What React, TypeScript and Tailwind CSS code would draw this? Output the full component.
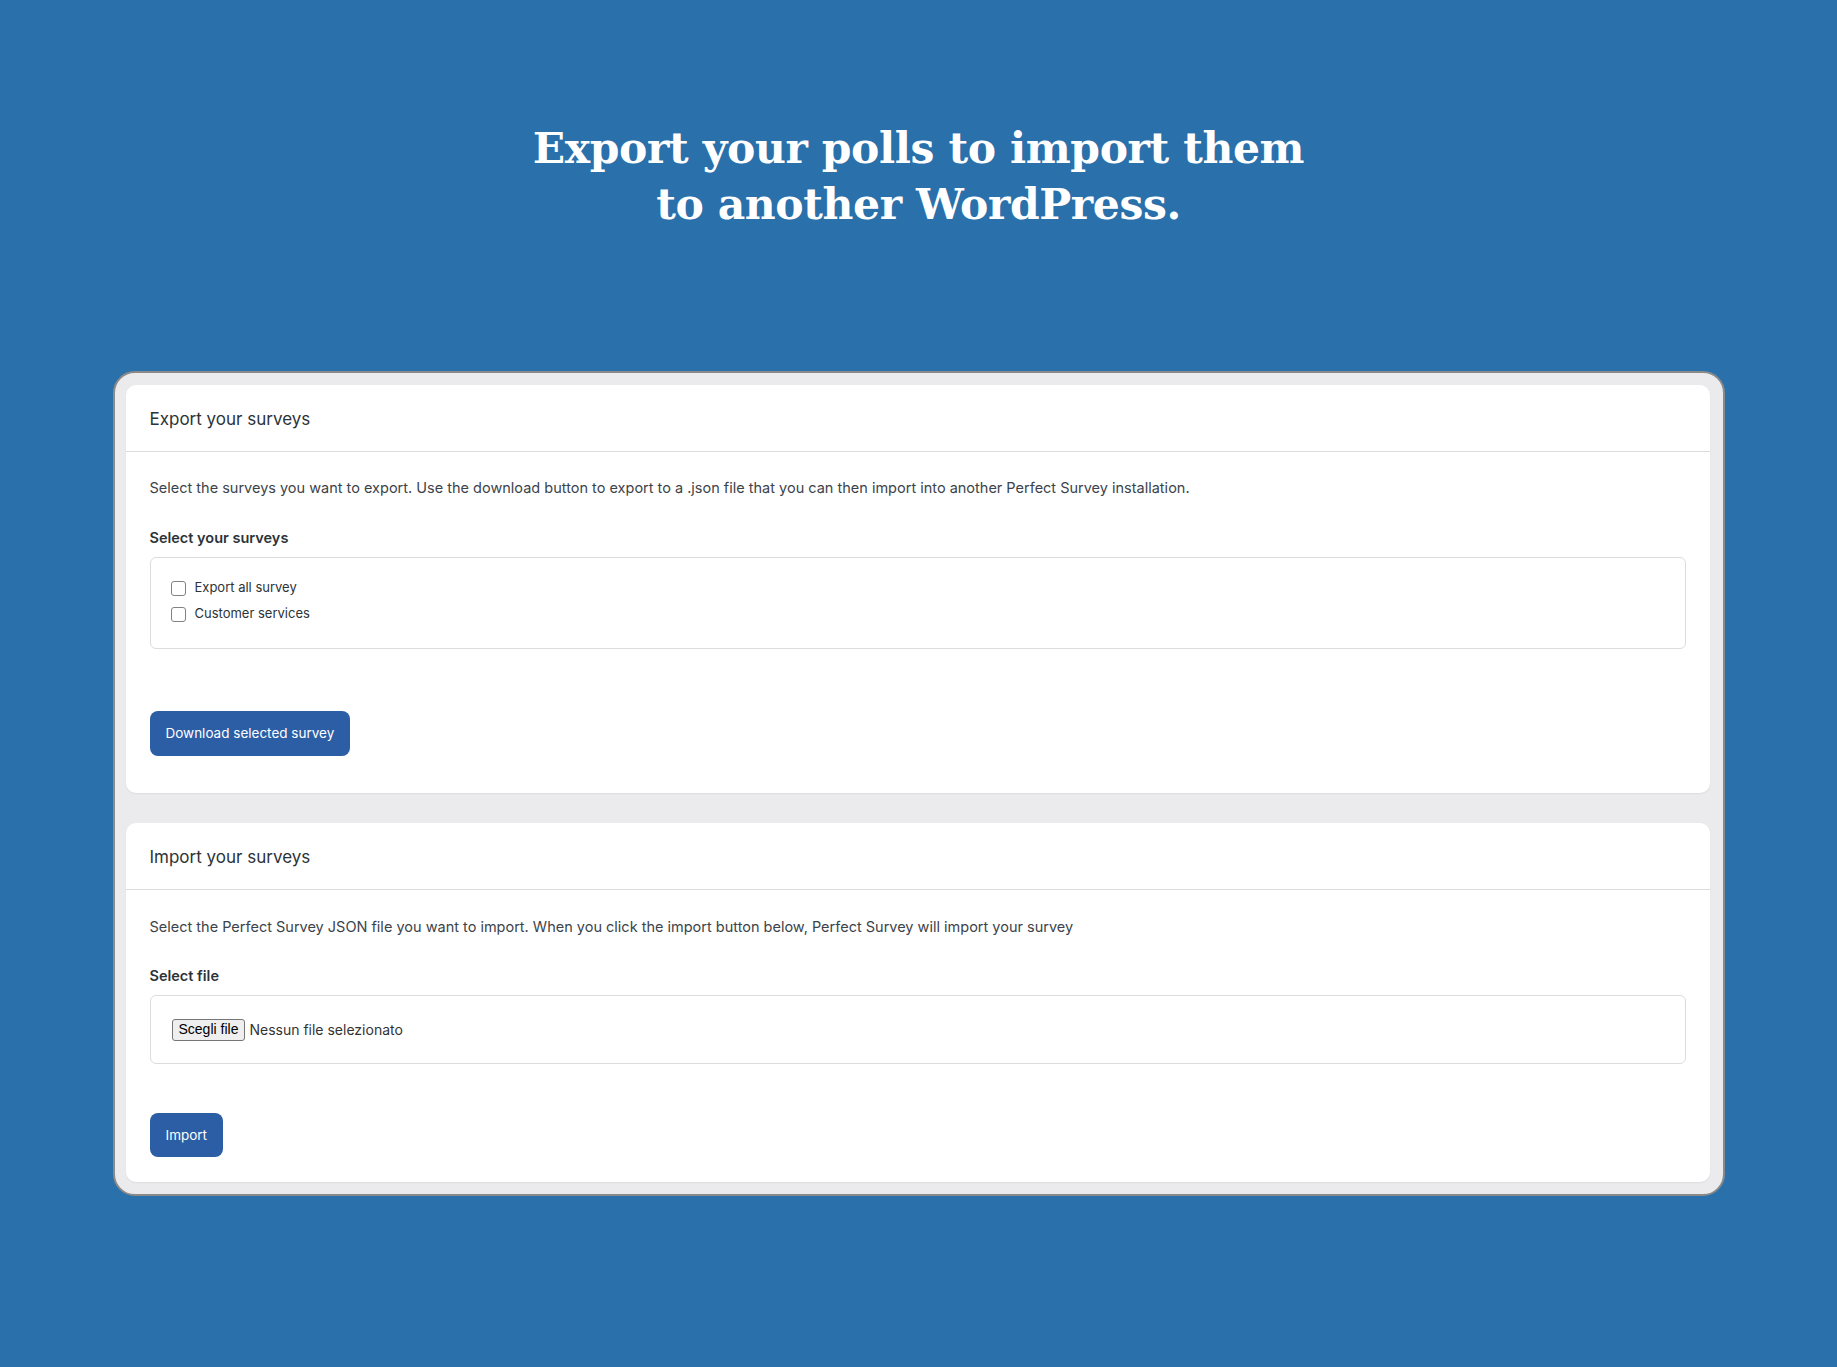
const sans = "font-['Inter','Noto_Sans',sans-serif]";

function Checkbox({ label }: { label: string }) {
  return (
    <label className="flex h-[26px] items-center gap-[9px] text-[13px] text-[#2c3338]">
      <span className="h-[15px] w-[15px] rounded-[3px] border border-[#7e8287] bg-white" />
      {label}
    </label>
  );
}

function CardHeader({ title }: { title: string }) {
  return (
    <div className="flex h-[67px] items-center border-b border-[#dcdcde] px-6 pt-[4px] text-[17px] text-[#2c3338]">
      {title}
    </div>
  );
}

export default function App() {
  return (
    <div className={`min-h-screen bg-[#2a70ab] pt-[120px] ${sans}`}>
      <h1 className="text-center font-['DejaVu_Serif',serif] text-[42.5px] font-bold leading-[56px] tracking-[-0.4px] text-white">
        Export your polls to import them
        <br />
        to another WordPress.
      </h1>

      <div className="mx-auto mt-[139px] w-[1612px] rounded-[22px] border-2 border-[#8a8a8a] bg-[#ebebed] pb-[12px] pl-[11px] pr-[13px] pt-[12px]">
        <section className="rounded-[10px] bg-white shadow-[0_1px_2px_rgba(0,0,0,0.06)]">
          <CardHeader title="Export your surveys" />
          <div className="px-6 pb-[37px] pt-[25px]">
            <p className="text-[14.5px] leading-[22px] text-[#3c434a]">
              Select the surveys you want to export. Use the download button to export to a .json file that you can then
              import into another Perfect Survey installation.
            </p>
            <h3 className="mt-[28px] text-[14.5px] font-semibold leading-[22px] text-[#2c3338]">Select your surveys</h3>
            <div className="mt-[8px] rounded-[6px] border border-[#dcdcde] px-[20px] pb-[21px] pt-[17px]">
              <Checkbox label="Export all survey" />
              <Checkbox label="Customer services" />
            </div>
            <button className="mt-[62px] flex h-[45px] items-center rounded-[8px] bg-[#2c5ea6] px-[16px] text-[13.5px] text-white">
              Download selected survey
            </button>
          </div>
        </section>

        <section className="mt-[30px] rounded-[10px] bg-white shadow-[0_1px_2px_rgba(0,0,0,0.06)]">
          <CardHeader title="Import your surveys" />
          <div className="px-6 pb-[25px] pt-[26px]">
            <p className="text-[14.5px] leading-[22px] text-[#3c434a]">
              Select the Perfect Survey JSON file you want to import. When you click the import button below, Perfect
              Survey will import your survey
            </p>
            <h3 className="mt-[27px] text-[14.5px] font-semibold leading-[22px] text-[#2c3338]">Select file</h3>
            <div className="mt-[8px] flex h-[69px] items-center rounded-[6px] border border-[#dcdcde] px-[21px]">
              <span className="flex h-[22px] items-center rounded-[3px] border border-[#767676] bg-[#efefef] px-[6px] font-['Liberation_Sans',sans-serif] text-[14px] text-black">
                Scegli file
              </span>
              <span className="ml-[4px] text-[14px] text-[#333]">Nessun file selezionato</span>
            </div>
            <button className="mt-[49px] flex h-[44px] items-center rounded-[8px] bg-[#2c5ea6] px-[16px] text-[13.5px] text-white">
              Import
            </button>
          </div>
        </section>
      </div>
    </div>
  );
}
